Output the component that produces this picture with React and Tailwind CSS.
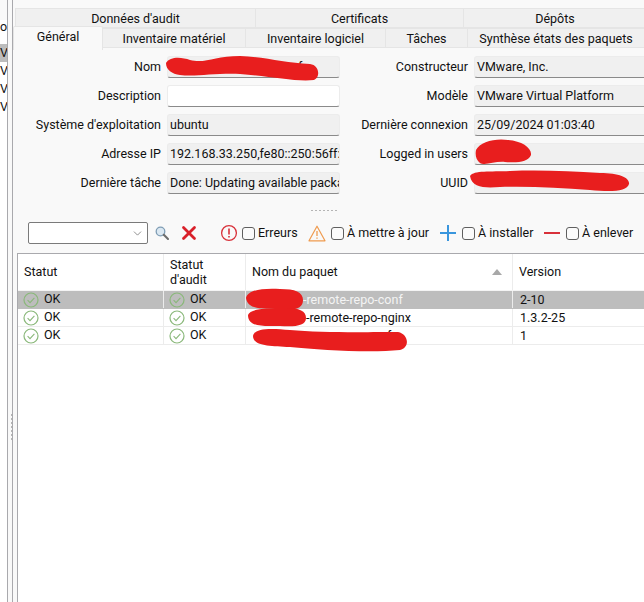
import { X, ChevronDown } from 'lucide-react'

const leftFields = [
  ['Nom', 'f', false, 'pl-[130px]'],
  ['Description', '', true],
  ["Système d'exploitation", 'ubuntu'],
  ['Adresse IP', '192.168.33.250,fe80::250:56ff:fe8a:1234'],
  ['Dernière tâche', 'Done: Updating available packages'],
]
const rightFields = [
  ['Constructeur', 'VMware, Inc.'],
  ['Modèle', 'VMware Virtual Platform'],
  ['Dernière connexion', '25/09/2024 01:03:40'],
  ['Logged in users', ''],
  ['UUID', ''],
]
const rows = [
  { name: '-remote-repo-conf', pad: 'pl-[57px]', version: '2-10', selected: true },
  { name: '-remote-repo-nginx', pad: 'pl-[60px]', version: '1.3.2-25' },
  { name: 'f', pad: 'pl-[141px]', version: '1' },
]

function Field({ label, value, white, pad, labelWidth, width }) {
  return (
    <div className="flex items-center h-[22px]">
      <div className={`${labelWidth} shrink-0 text-right pr-[6px] whitespace-nowrap`}>{label}</div>
      <div className={`${width} h-[22px] shrink-0 overflow-hidden whitespace-nowrap rounded-[3px] border border-[#ececec] border-b-[#8a8a8a] ${pad || 'pl-[2px]'} leading-[19px] ${white ? 'bg-white' : 'bg-[#f0f0f0]'}`}>
        {value}
      </div>
    </div>
  )
}

function Check() {
  return <span className="block w-[13px] h-[13px] shrink-0 rounded-[3px] border border-[#5f5f5f] bg-[#fbfbfb]" />
}

function OkIcon() {
  return (
    <svg width="16" height="16" viewBox="0 0 16 16" fill="none" className="shrink-0">
      <circle cx="8" cy="8" r="7" stroke="#8ab87a" strokeWidth="1.2" />
      <path d="M4.6 8.2 L7 10.6 L11.4 5.8" stroke="#8ab87a" strokeWidth="1.1" />
    </svg>
  )
}

function OkCell({ width }) {
  return (
    <div className={`${width} shrink-0 flex items-center pl-[5px] border-r border-[#ececec]`}>
      <OkIcon />
      <span className="ml-[5px]">OK</span>
    </div>
  )
}

function SearchIcon() {
  return (
    <svg width="14" height="14" viewBox="0 0 14 14" fill="none" className="shrink-0">
      <circle cx="5.5" cy="5.5" r="4.3" fill="#dbe8f2" stroke="#7f9db5" strokeWidth="1.3" />
      <path d="M8.8 8.8 L13 13" stroke="#6c6c6c" strokeWidth="2" strokeLinecap="round" />
    </svg>
  )
}

export default function App() {
  return (
    <div className="w-[644px] h-[602px] overflow-hidden bg-[#f9f9f9] flex text-[12.5px] text-[#111] font-['Roboto','Noto_Sans',sans-serif] relative">
      {/* clipped tree on the left */}
      <div className="w-[8px] shrink-0 border-r border-[#a9a9ad] h-full flex flex-col pt-[20px] overflow-hidden">
        <div className="bg-white h-[24px] leading-[14px] overflow-hidden">o</div>
        <div className="bg-[#bdbdbd] h-[18px] leading-[18px]">V</div>
        <div className="bg-white h-[18px] leading-[18px]">V</div>
        <div className="bg-white h-[18px] leading-[18px]">V</div>
        <div className="bg-white h-[18px] leading-[18px]">V</div>
        <div className="bg-white grow" />
      </div>

      {/* vertical splitter */}
      <div className="w-[8px] shrink-0 h-full flex items-start justify-center">
        <div className="mt-[414px] flex flex-col gap-[2px]">
          {[0, 1, 2, 3, 4, 5, 6].map(i => <span key={i} className="block w-[2px] h-[2px] bg-[#b5b5b5]" />)}
        </div>
      </div>

      <div className="grow min-w-0 border-l border-[#a9a9ad] -ml-[4px] flex flex-col">
        {/* tabs */}
        <div className="pt-[8px] h-[48px] relative shrink-0 text-center">
          <div className="flex h-[20px] ml-[2px]">
            <div className="w-[241px] shrink-0 bg-[#f0f0f0] border border-[#e5e5e5] leading-[20px]">Données d'audit</div>
            <div className="w-[208px] shrink-0 bg-[#f0f0f0] border-y border-r border-[#e5e5e5] leading-[20px]">Certificats</div>
            <div className="w-[182px] shrink-0 bg-[#f0f0f0] border-y border-[#e5e5e5] leading-[20px]">Dépôts</div>
          </div>
          <div className="flex h-[20px] items-stretch">
            <div className="w-[90px] shrink-0 h-[24px] -mt-[2px] bg-[#f9f9f9] border-x border-t border-[#e5e5e5] rounded-t-[2px] leading-[20px] relative z-10">Général</div>
            <div className="w-[143px] shrink-0 bg-[#f0f0f0] border-y border-r border-[#e5e5e5] leading-[20px]">Inventaire matériel</div>
            <div className="w-[140px] shrink-0 bg-[#f0f0f0] border-y border-r border-[#e5e5e5] leading-[20px]">Inventaire logiciel</div>
            <div className="w-[82px] shrink-0 bg-[#f0f0f0] border-y border-r border-[#e5e5e5] leading-[20px]">Tâches</div>
            <div className="w-[176px] shrink-0 bg-[#f0f0f0] border-y border-[#e5e5e5] leading-[20px] whitespace-nowrap">Synthèse états des paquets</div>
          </div>
        </div>

        {/* form */}
        <div className="flex pt-[8px] shrink-0">
          <div className="w-[327px] shrink-0 flex flex-col gap-[7px]">
            {leftFields.map(f => (
              <Field key={f[0]} label={f[0]} value={f[1]} white={f[2]} pad={f[3]} labelWidth="w-[154px]" width="w-[173px]" />
            ))}
          </div>
          <div className="grow flex flex-col gap-[7px]">
            {rightFields.map(f => (
              <Field key={f[0]} label={f[0]} value={f[1]} labelWidth="w-[134px]" width="w-[180px]" />
            ))}
          </div>
        </div>

        {/* horizontal splitter */}
        <div className="h-[28px] shrink-0 flex items-start justify-center pt-[16px] pr-[10px] gap-[2px]">
          {[0, 1, 2, 3, 4, 5, 6].map(i => <span key={i} className="block w-[2px] h-[1px] bg-[#b5b5b5]" />)}
        </div>

        {/* filter toolbar */}
        <div className="flex items-center h-[22px] shrink-0 pl-[15px] whitespace-nowrap">
          <div className="w-[120px] h-[22px] shrink-0 bg-white border border-[#7a7a7a] rounded-[2px] flex items-center justify-end pr-[3px]">
            <ChevronDown size={13} strokeWidth={1.2} className="text-[#555]" />
          </div>
          <span className="ml-[7px]"><SearchIcon /></span>
          <X size={22} strokeWidth={3} className="ml-[9px] shrink-0 text-[#d9202a]" />
          <svg width="18" height="18" viewBox="0 0 18 18" fill="none" className="ml-[20px] shrink-0">
            <circle cx="9" cy="9" r="7.4" stroke="#d8313a" strokeWidth="1.3" />
            <path d="M9 4.5 V10.5 M9 12 V13.4" stroke="#d8313a" strokeWidth="1.6" />
          </svg>
          <span className="ml-[4px]"><Check /></span>
          <span className="ml-[3px] w-[50px] shrink-0">Erreurs</span>
          <svg width="18" height="17" viewBox="0 0 18 17" fill="none" className="shrink-0">
            <path d="M9 1.2 L17 15.8 H1 Z" stroke="#ef9b4f" strokeWidth="1.2" strokeLinejoin="round" />
            <path d="M9 6 V11 M9 12.4 V13.8" stroke="#ef9b4f" strokeWidth="1.3" />
          </svg>
          <span className="ml-[5px]"><Check /></span>
          <span className="ml-[3px] w-[93px] shrink-0">À mettre à jour</span>
          <svg width="16" height="16" viewBox="0 0 16 16" className="shrink-0">
            <path d="M8 0 V16 M0 8 H16" stroke="#3a96dd" strokeWidth="2" />
          </svg>
          <span className="ml-[6px]"><Check /></span>
          <span className="ml-[3px] w-[66px] shrink-0">À installer</span>
          <svg width="16" height="16" viewBox="0 0 16 16" className="shrink-0">
            <path d="M0 8 H16" stroke="#d8313a" strokeWidth="2" />
          </svg>
          <span className="ml-[6px]"><Check /></span>
          <span className="ml-[3px] w-[65px] shrink-0">À enlever</span>
          <span className="w-[12px] h-[18px] shrink-0 rounded-[3px] border border-[#d0d0d0] bg-[#fbfbfb]" />
        </div>

        {/* packages table */}
        <div className="mt-[9px] ml-[4px] grow bg-white border-t border-l border-[#a9a9ad] min-h-0">
          <div className="flex h-[37px] border-b border-[#f4f4f4]">
            <div className="w-[146px] shrink-0 border-r border-[#ececec] pl-[6px] flex items-center">Statut</div>
            <div className="w-[82px] shrink-0 border-r border-[#ececec] pl-[6px] flex items-center leading-[15px]">Statut<br />d'audit</div>
            <div className="w-[267px] shrink-0 border-r border-[#ececec] pl-[6px] pr-[10px] flex items-center justify-between">
              <span>Nom du paquet</span>
              <svg width="10" height="6" viewBox="0 0 10 6"><path d="M0 6 L5 0 L10 6 Z" fill="#a8a8a8" /></svg>
            </div>
            <div className="grow pl-[6px] flex items-center">Version</div>
          </div>
          {rows.map((r, i) => (
            <div key={i} className={`flex h-[18px] border-b ${r.selected ? 'bg-[#bdbdbd] border-[#bdbdbd]' : 'border-[#ececec]'}`}>
              <OkCell width="w-[146px]" />
              <OkCell width="w-[82px]" />
              <div className={`w-[267px] shrink-0 border-r border-[#ececec] whitespace-nowrap overflow-hidden leading-[17px] ${r.pad} ${r.selected ? 'text-[#f4f4f4]' : ''}`}>{r.name}</div>
              <div className="grow pl-[7px] leading-[17px]">{r.version}</div>
            </div>
          ))}
        </div>
      </div>

      {/* red scribbles drawn over the screenshot */}
      <svg className="absolute inset-0 pointer-events-none" width="644" height="602" viewBox="0 0 644 602" fill="#e81e1e">
        <path d="M166 63 C170 56 182 57 190 60 C205 64 215 56 240 56 C265 57 285 63 310 64 C319 65 321 77 314 80 C295 82 270 76 240 74 C215 73 195 77 180 75 C172 74 166 70 166 63 Z" />
        <path d="M476 150 C480 142 495 138 508 140 C522 141 532 148 531 155 C528 162 518 163 505 162 C495 161 485 166 480 163 C476 160 475 155 476 150 Z" />
        <path d="M470 176 C474 170 490 172 510 171 C540 170 570 171 600 173 C620 173 630 178 629 184 C627 192 610 192 590 190 C560 188 530 186 500 187 C485 188 472 188 470 176 Z" />
        <path d="M246 298 C248 290 262 288 280 289 C295 289 303 292 303 300 C303 308 296 311 280 309 C265 308 248 311 246 298 Z" />
        <path d="M248 315 C250 309 265 308 285 308 C300 308 306 311 306 318 C306 326 295 327 280 326 C265 326 248 328 248 315 Z" />
        <path d="M253 336 C254 328 270 328 290 330 C320 333 370 332 398 332 C409 334 410 348 400 350 C370 353 320 350 290 347 C270 346 253 346 253 336 Z" />
      </svg>
    </div>
  )
}
